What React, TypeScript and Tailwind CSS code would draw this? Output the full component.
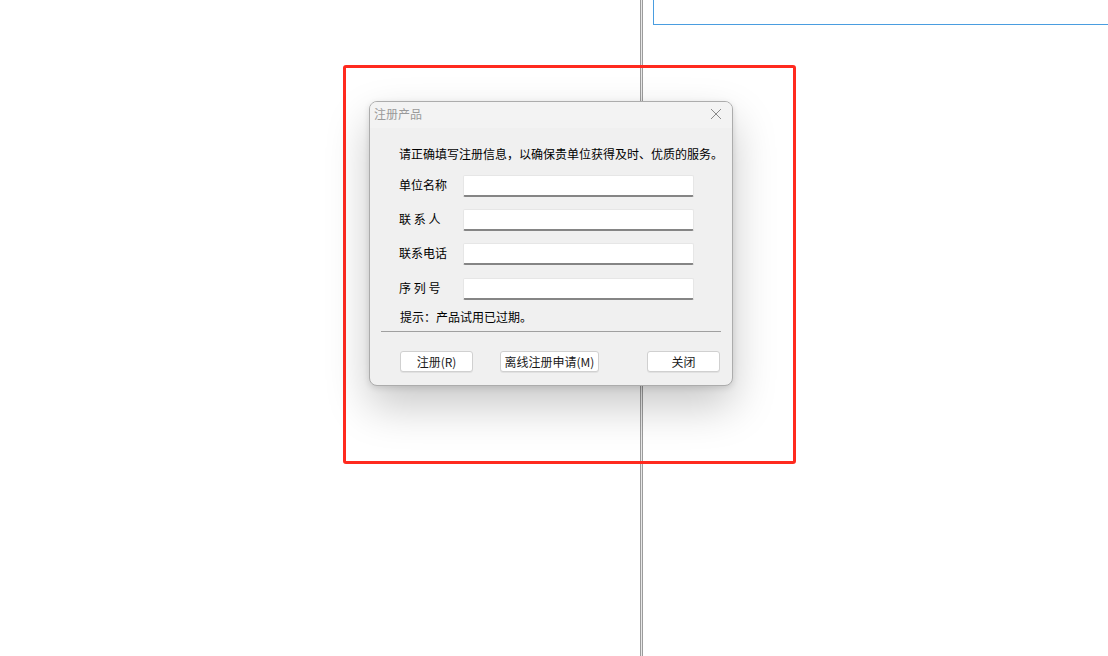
import { useState } from 'react';

const fields = [
  { label: '单位名称', key: 'company' },
  { label: '联 系 人', key: 'contact' },
  { label: '联系电话', key: 'phone' },
  { label: '序 列 号', key: 'serial' },
];

const DialogButton = ({ children, className = '' }: { children: React.ReactNode; className?: string }) => (
  <button
    className={`h-[21px] rounded-[3px] border border-[#d0d0d0] bg-white text-[12px] leading-none text-[#1a1a1a] shadow-[0_1px_0_rgba(0,0,0,0.06)] ${className}`}
  >
    {children}
  </button>
);

const RegisterDialog = () => {
  const [values, setValues] = useState<Record<string, string>>({});

  return (
    <div className="flex h-[285px] w-[364px] flex-col overflow-hidden rounded-[8px] border border-[#acacac] bg-[#f0f0f0] shadow-[0_20px_44px_rgba(0,0,0,0.22),0_2px_6px_rgba(0,0,0,0.12)]">
      {/* title bar */}
      <div className="flex h-[26px] shrink-0 items-center justify-between bg-[#f3f3f3] pb-[3px] pl-[4px] pr-[10px]">
        <span className="text-[12px] leading-none text-[#9a9a9a]">注册产品</span>
        <svg width="12" height="12" viewBox="0 0 12 12" className="mt-[1px]">
          <path d="M1 1L11 11M11 1L1 11" stroke="#8a8a8a" strokeWidth="1" fill="none" />
        </svg>
      </div>

      <div className="flex flex-col pl-[29px]">
        <p className="mt-[18px] text-[12px] leading-[16px] text-black">请正确填写注册信息，以确保贵单位获得及时、优质的服务。</p>

        <div className="mt-[13px] flex flex-col gap-[12px]">
          {fields.map((f, i) => (
            <div key={f.key} className={`flex items-center ${i === 3 ? 'mt-[1px]' : ''}`}>
              <label className="-mt-[2px] w-[64px] whitespace-pre text-[12px] leading-none text-black">{f.label}</label>
              <input
                value={values[f.key] ?? ''}
                onChange={(e) => setValues({ ...values, [f.key]: e.target.value })}
                className="h-[22px] w-[231px] rounded-[2px] border border-[#e6e6e6] border-b-2 border-b-[#858585] bg-white px-1 text-[12px] outline-none"
              />
            </div>
          ))}
        </div>

        <p className="mt-[9px] pl-[1px] text-[12px] leading-[16px] text-black">提示：产品试用已过期。</p>
      </div>

      <div className="mx-[11px] mt-[6px] h-px bg-[#a0a0a0]" />

      <div className="mt-[19px] flex items-center pl-[30px] pr-[12px]">
        <DialogButton className="w-[73px]">注册(R)</DialogButton>
        <DialogButton className="ml-[27px] w-[99px]">离线注册申请(M)</DialogButton>
        <DialogButton className="ml-auto w-[73px]">关闭</DialogButton>
      </div>
    </div>
  );
};

export default function App() {
  return (
    <div
      className="relative h-[656px] w-[1108px] overflow-hidden bg-white"
      style={{ fontFamily: '"Noto Sans CJK SC", "Noto Sans", sans-serif' }}
    >
      {/* splitter line behind */}
      <div className="absolute left-[640px] top-0 h-full w-[3px] border-x border-[#9c9c9c] bg-[#e8e8e8]" />

      {/* blue outlined pane top right */}
      <div className="absolute -top-[10px] left-[653px] h-[35px] w-[470px] border border-[#4a9de0]" />

      {/* red highlight box */}
      <div className="absolute left-[343px] top-[65px] h-[399px] w-[453px] rounded-[3px] border-[3px] border-[#ff2a1f]" />

      <div className="absolute left-[369px] top-[101px]">
        <RegisterDialog />
      </div>
    </div>
  );
}
